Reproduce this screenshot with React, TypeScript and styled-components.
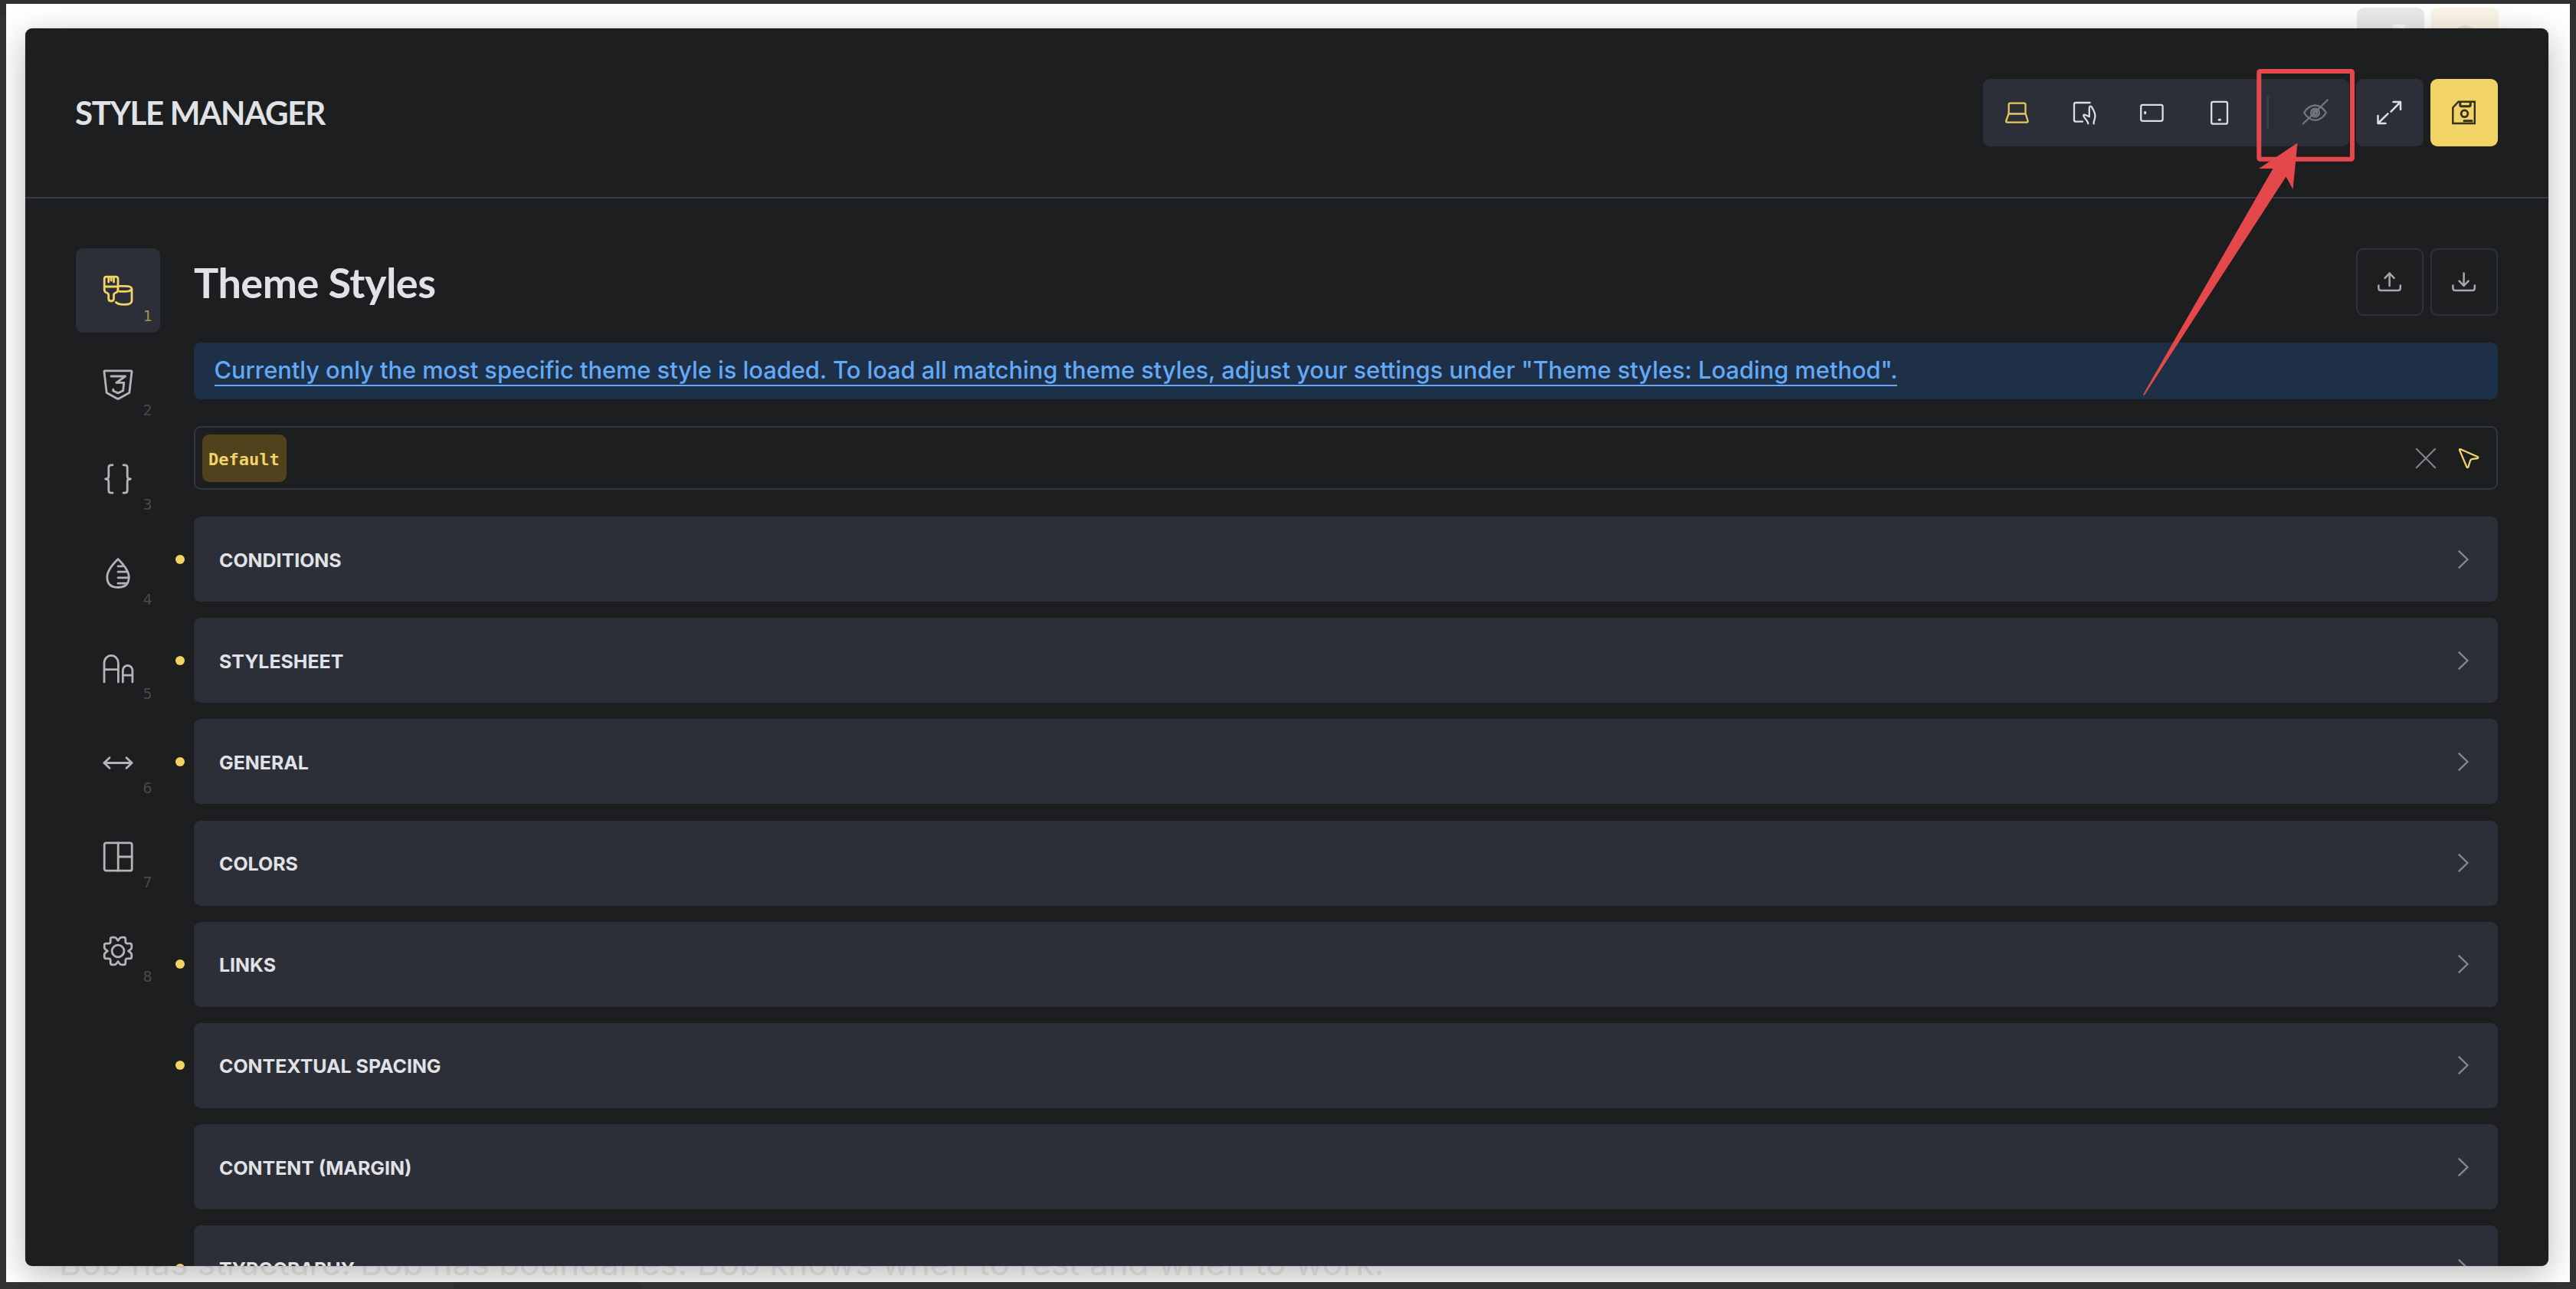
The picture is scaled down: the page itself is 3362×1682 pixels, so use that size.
import React from 'react';
import styled, { createGlobalStyle } from 'styled-components';

const GlobalStyle = createGlobalStyle`
    * {
        box-sizing: border-box;
    }

    body {
        margin: 0;
        background: #323232;
    }
`

const Frame = styled.div`
    display: flex;
    flex-direction: column;
    width: 3362px;
    height: 1682px;
    padding: 5px 8px 0;
    overflow: hidden;
    background: linear-gradient(#2f2f2f 21px, #323232 22px);
    font-family: Inter, sans-serif;
`

const Page = styled.div`
    position: relative;
    display: flex;
    flex-direction: column;
    justify-content: space-between;
    height: 1668px;
    overflow: hidden;
    background: white;
`

const BottomTab = styled.div`
    width: 246px;
    height: 9px;
    margin-left: 584px;
    border-radius: 6px 6px 0 0;
    background: #2d2d2d;
`

const PageButtons = styled.div`
    display: flex;
    justify-content: flex-end;
    gap: 8.8px;
    padding: 5px 93.5px 0 0;
`

const PageButton = styled.div<{ $color: string, $background: string }>`
    display: flex;
    justify-content: center;
    width: 88px;
    height: 88px;
    padding-top: 15px;
    border-radius: 9px;
    color: ${props => props.$color};
    background: ${props => props.$background};
`

const PageQuote = styled.p`
    margin: 0;
    padding-left: 69px;
    color: #ececec;
    font-size: 44px;
    line-height: 50px;
    white-space: nowrap;
`

// The window sits on top of the page

const Manager = styled.div`
    position: absolute;
    top: 32px;
    left: 25px;
    display: flex;
    flex-direction: column;
    width: 3293px;
    height: 1615px;
    overflow: hidden;
    border-radius: 9px;
    background: #1d1e20;
    color: #e0e2e6;
    box-shadow: 0 11px 44px rgba(0, 0, 0, 0.28), 0 0 1px rgba(0, 0, 0, 0.5);
`

const Header = styled.header`
    display: flex;
    align-items: center;
    justify-content: space-between;
    height: 222px;
    flex-shrink: 0;
    padding: 0 66px;
    border-bottom: 2px solid #363a42;
`

const HeaderTitle = styled.h1`
    margin: 0 0 1px -1px;
    font-family: Lato, sans-serif;
    font-size: 42px;
    font-weight: bold;
    letter-spacing: -1.3px;
`

const HeaderActions = styled.div`
    display: flex;
    gap: 8.8px;
`

const ButtonGroup = styled.div`
    display: flex;
    align-items: center;
    border-radius: 9px;
    background: #2c2f37;
`

const GroupDivider = styled.div`
    width: 3px;
    height: 44px;
    margin: 0 17.6px;
    background: #3a3e47;
`

const IconButton = styled.button<{ $color?: string, $background?: string, $outlined?: boolean }>`
    display: flex;
    align-items: center;
    justify-content: center;
    width: 88px;
    height: 88px;
    padding: 0;
    color: ${props => props.$color || '#dcdee1'};
    background: ${props => props.$background || 'transparent'};
    border: ${props => props.$outlined ? '2px solid #2e3138' : 'none'};
    border-radius: 9px;
`

const Body = styled.div`
    display: flex;
    gap: 44px;
    padding: 65px 66px 0;
`

const Sidebar = styled.nav`
    display: flex;
    flex-direction: column;
    gap: 13.7px;
    width: 110px;
`

const SidebarItem = styled.div<{ $active?: boolean }>`
    position: relative;
    display: flex;
    align-items: center;
    justify-content: center;
    height: 109.5px;
    border-radius: 9px;
    color: ${props => props.$active ? '#f2d366' : '#b2b4b7'};
    background: ${props => props.$active ? '#2c2f37' : 'transparent'};

    > span {
        position: absolute;
        right: 10.5px;
        bottom: 9.5px;
        color: ${props => props.$active ? '#a3904c' : '#48494c'};
        font-family: 'DejaVu Sans Mono', monospace;
        font-size: 20px;
        line-height: 24px;
    }
`

const Content = styled.main`
    display: flex;
    flex: 1;
    flex-direction: column;
`

const ContentHeader = styled.div`
    display: flex;
    align-items: center;
    justify-content: space-between;
    height: 88px;
`

const ContentTitle = styled.h2`
    margin: 0;
    font-family: Lato, sans-serif;
    font-size: 54px;
    font-weight: bold;
    letter-spacing: -0.5px;
`

const Info = styled.div`
    display: flex;
    align-items: center;
    height: 74px;
    margin-top: 35px;
    padding-left: 26.5px;
    border-radius: 9px;
    background: #1d3047;
`

const InfoLink = styled.a`
    padding-bottom: 1px;
    border-bottom: 2px solid #63a9f5;
    color: #63a9f5;
    font-size: 30.8px;
    font-weight: 500;
    letter-spacing: -0.02px;
    line-height: 37px;
    white-space: nowrap;
`

const StyleInput = styled.div`
    display: flex;
    align-items: center;
    height: 83px;
    margin-top: 35px;
    padding: 0 23px 0 8.5px;
    border: 2px solid #33373e;
    border-radius: 9px;
`

const StyleTag = styled.span`
    display: flex;
    align-items: center;
    height: 62px;
    margin-right: auto;
    padding: 3px 9.5px 0 8.5px;
    border-radius: 9px;
    color: #f2d366;
    background: #4f421d;
    font-family: 'DejaVu Sans Mono', monospace;
    font-size: 22px;
    font-weight: bold;
`

const InputIcons = styled.div`
    display: flex;
    gap: 30.5px;
`

const SectionList = styled.ul`
    display: flex;
    flex-direction: column;
    gap: 21.2px;
    margin: 35px 0 0;
    padding: 0;
    list-style: none;
`

const Section = styled.li<{ $changed?: boolean }>`
    position: relative;
    display: flex;
    align-items: center;
    justify-content: space-between;
    height: 111px;
    padding: 0 38px 0 33px;
    border-radius: 9px;
    background: #2c2f37;
    font-size: 24.9px;
    font-weight: 700;

    &::before {
        content: '';
        display: ${props => props.$changed ? 'block' : 'none'};
        position: absolute;
        left: -24px;
        width: 12px;
        height: 12px;
        border-radius: 50%;
        background: #f2d366;
    }
`

const SectionTitle = styled.span`
    padding-top: 2px;
`

const IconTone = styled.span<{ $color: string }>`
    display: block;
    color: ${props => props.$color};
`

const Annotation = styled.svg`
    position: absolute;
    top: 0;
    left: 0;
    pointer-events: none;
`

const Svg = styled.svg`
    display: block;
    overflow: visible;
    fill: none;
    stroke: currentColor;
    stroke-linecap: round;
    stroke-linejoin: round;
`

interface IconProps {
    size?: number,
    stroke?: number,
    children: React.ReactNode
}

const Icon = ({ size = 30, stroke = 2.3, children }: IconProps) => (
    <Svg width={size} height={size} viewBox={`0 0 ${size} ${size}`} strokeWidth={stroke}>
        {children}
    </Svg>
)

const ExpandIcon = () => (
    <Icon stroke={2.5}>
        <path d="M19.5 1H29V11M29 1L16.5 13.7M-.5 19V29H9.5M-.5 29L12.5 16.3" />
    </Icon>
)

const SaveIcon = () => (
    <Icon stroke={2.4}>
        <path strokeLinejoin="miter" d="M7.5 .8H28.8V29H.3V8.5z" />
        <path d="M9.8 1.5V5q0 1.8 1.8 1.8h9.8q1.8 0 1.8-1.8V1.5" strokeWidth="3" />
        <circle cx="15.5" cy="16.3" r="4.4" strokeWidth="2.8" />
        <path d="M15 25.8h10" strokeWidth="3" />
    </Icon>
)

const GearTeeth = 'M19 5.2L21.3 2.4Q22.3 1.2 23.8 1.2H26.6Q28.8 1.2 28.8 3.4V6.8Q28.8 9.2 31.2 9.2H34.6Q36.8 9.2 36.8 11.4V14.2Q36.8 15.7 35.6 16.7Q32.8 19 32.8 19'

const sidebarIcons = [
    <Icon size={38} stroke={2.8}>
        <path d="M1.2 14V4Q1.2 1.2 4 1.2H16.2Q19 1.2 19 4V14zM6.7 1.5V8M10.1 1.5V6M13.5 1.5V8" />
        <path d="M1.2 14V17.5Q1.2 21 4.3 22Q6.7 22.8 6.7 25V29.5Q6.7 33 10.1 33T13.5 29.5V25Q13.5 22.8 15.9 22Q19 21 19 17.5V14" />
        <path d="M21 13.4H28Q37 13.4 37 17.2V32.5Q37 37.4 27 37.4Q18.5 37.4 16.3 34.4M21 20.4H27.5Q35 20.4 37 17.2" />
    </Icon>,
    <Icon size={38} stroke={2.8}>
        <path d="M2.2 .8H35.8Q37.2 .8 37 2.3L33.8 29.6L20.4 36.9Q19 37.6 17.6 36.9L4.2 29.6L1 2.3Q.8 .8 2.2 .8z" />
        <path d="M10 8H28.6L16.8 16.4H26.8L25.6 26.8L19 30L12.8 27V25.2" />
    </Icon>,
    <Icon size={38} stroke={2.8}>
        <path d="M12 .8H10Q6.8 .8 6.8 4V15.5Q6.8 19 2.6 19Q6.8 19 6.8 22.5V34Q6.8 37.2 10 37.2H12" />
        <path d="M26 .8H28Q31.2 .8 31.2 4V15.5Q31.2 19 35.4 19Q31.2 19 31.2 22.5V34Q31.2 37.2 28 37.2H26" />
    </Icon>,
    <Icon size={38} stroke={2.8}>
        <path d="M19 .5Q4.8 14.5 4.8 24Q4.8 37.5 19 37.5T33.2 24Q33.2 14.5 19 .5z" />
        <path d="M19 9.8H25M19 17.2H30M19 24.8H33M19 32.2H30" />
    </Icon>,
    <Icon size={38} stroke={2.8}>
        <path d="M1 37V12.3a9.2 9.9 0 0 1 18.4 0V37M1 20.6H19.4M25.3 37V22a6.3 6.6 0 0 1 12.6 0V37M25.3 28.2H37.9" />
    </Icon>,
    <Icon size={38} stroke={2.8}>
        <path d="M.8 19.5H37.2M8 12.8L.8 19.5L8 26.2M30 12.8L37.2 19.5L30 26.2" />
    </Icon>,
    <Icon size={38} stroke={2.8}>
        <rect x="1.2" y=".8" width="36" height="36.4" rx="2.5" />
        <path d="M19.2 .8V37.2M19.2 19H37.2" />
    </Icon>,
    <Icon size={38} stroke={2.8}>
        <path d={GearTeeth} />
        <path d={GearTeeth} transform="rotate(90 19 19)" />
        <path d={GearTeeth} transform="rotate(180 19 19)" />
        <path d={GearTeeth} transform="rotate(270 19 19)" />
        <circle cx="19" cy="19" r="7.9" />
    </Icon>
]

const sections = [
    { title: 'CONDITIONS', changed: true },
    { title: 'STYLESHEET', changed: true },
    { title: 'GENERAL', changed: true },
    { title: 'COLORS', changed: false },
    { title: 'LINKS', changed: true },
    { title: 'CONTEXTUAL SPACING', changed: true },
    { title: 'CONTENT (MARGIN)', changed: false },
    { title: 'TYPOGRAPHY', changed: true }
]

const Toolbar = () => (
    <HeaderActions>
        <ButtonGroup>
            <IconButton $color="#e6c860">
                <Icon>
                    <path d="M4.7 16.5V4.5Q4.7 2.6 6.6 2.6H24.6Q26.5 2.6 26.5 4.5V16.5M4.5 16.5H26.7L29.5 25.5Q30 27.6 28.2 27.6H2.6Q.8 27.6 1.3 25.5z" />
                </Icon>
            </IconButton>
            <IconButton>
                <Icon>
                    <path d="M22.6 2H4.2Q2 2 2 4.2V24.4Q2 26.6 4.2 26.6H13" />
                    <path d="M20.3 29.3Q19.8 26.5 17.5 24Q14 20 14.3 18.6Q14.8 17 16.8 18L21.8 20.3V9Q21.8 6.6 23.4 6.6Q24.8 6.6 26 9.5Q29.5 15.5 29.4 19.5Q29.3 22 28.3 25Q27.4 27.5 27.6 29.3" />
                </Icon>
            </IconButton>
            <IconButton>
                <Icon>
                    <rect x="1.2" y="4.8" width="28.4" height="21" rx="2.2" />
                    <path d="M6.7 14.6V15.8" strokeWidth="3" />
                </Icon>
            </IconButton>
            <IconButton>
                <Icon>
                    <rect x="5.2" y=".9" width="20.8" height="28.8" rx="2.2" />
                    <path d="M15.2 24.3H16.4" strokeWidth="3" />
                </Icon>
            </IconButton>
            <GroupDivider />
            <IconButton $color="#74777c">
                <Icon>
                    <path d="M.2 15Q6 5.5 14.5 5.5T28.8 15Q23 24.8 14.5 24.8T.2 15zM30.8 -1.5L-1.2 29.5" />
                    <circle cx="14.5" cy="15" r="5.4" />
                    <ellipse cx="14.5" cy="15" rx="2.4" ry="3" />
                </Icon>
            </IconButton>
        </ButtonGroup>
        <IconButton $background="#2c2f37"><ExpandIcon /></IconButton>
        <IconButton $background="#f2d366" $color="#33301f"><SaveIcon /></IconButton>
    </HeaderActions>
)

class App extends React.Component {

    render() {
        return (
            <React.Fragment>
                <GlobalStyle />
                <Frame>
                    <Page>
                        <PageButtons>
                            <PageButton $color="#f8f9f9" $background="#e8ebe9">
                                <Svg width="38" height="30" viewBox="0 0 38 30" strokeWidth="4">
                                    <path strokeLinecap="butt" strokeLinejoin="miter" d="M0 15H20M22 9H36V22M36 9L24 21" />
                                </Svg>
                            </PageButton>
                            <PageButton $color="#e6e4dc" $background="#fbf5e6">
                                <Svg width="30" height="40" viewBox="0 0 30 40" strokeWidth="4">
                                    <circle cx="15" cy="22" r="12" />
                                </Svg>
                            </PageButton>
                        </PageButtons>
                        <PageQuote>
                            Bob has structure. Bob has boundaries. Bob knows when to rest and when to work.
                        </PageQuote>
                        <Manager>
                            <Header>
                                <HeaderTitle>STYLE MANAGER</HeaderTitle>
                                <Toolbar />
                            </Header>
                            <Body>
                                <Sidebar>
                                    {
                                        sidebarIcons.map((icon, index) => (
                                            <SidebarItem key={index} $active={index === 0}>
                                                {icon}
                                                <span>{index + 1}</span>
                                            </SidebarItem>
                                        ))
                                    }
                                </Sidebar>
                                <Content>
                                    <ContentHeader>
                                        <ContentTitle>Theme Styles</ContentTitle>
                                        <HeaderActions>
                                            <IconButton $outlined $color="#a6a8ab">
                                                <Icon stroke={2.5}>
                                                    <path d="M14.6 20V3.5M8.6 9.8L14.6 3.5L20.6 9.8M.4 19.5V23Q.4 26 3.4 26H25.8Q28.8 26 28.8 23V19.5" />
                                                </Icon>
                                            </IconButton>
                                            <IconButton $outlined $color="#a6a8ab">
                                                <Icon stroke={2.5}>
                                                    <path d="M14.6 3.5V20M8.6 13.7L14.6 20L20.6 13.7M.4 19.5V23Q.4 26 3.4 26H25.8Q28.8 26 28.8 23V19.5" />
                                                </Icon>
                                            </IconButton>
                                        </HeaderActions>
                                    </ContentHeader>
                                    <Info>
                                        <InfoLink>
                                            Currently only the most specific theme style is loaded. To load all matching theme styles, adjust your settings under "Theme styles: Loading method".
                                        </InfoLink>
                                    </Info>
                                    <StyleInput>
                                        <StyleTag>Default</StyleTag>
                                        <InputIcons>
                                            <IconTone $color="#808285">
                                                <Icon size={26} stroke={2.2}>
                                                    <path d="M.8 .8L25.2 25.2M25.2 .8L.8 25.2" />
                                                </Icon>
                                            </IconTone>
                                            <IconTone $color="#f2d366">
                                                <Icon size={26}>
                                                    <path d="M1 2.2Q.8 .6 2.4 1.2L24.6 11Q26 12 24.6 13L17 14.2Q15.6 14.6 15 16L12.4 24.4Q11.4 25.8 10.4 24.4z" />
                                                </Icon>
                                            </IconTone>
                                        </InputIcons>
                                    </StyleInput>
                                    <SectionList>
                                        {
                                            sections.map(section => (
                                                <Section key={section.title} $changed={section.changed}>
                                                    <SectionTitle>{section.title}</SectionTitle>
                                                    <IconTone $color="#85878b">
                                                        <Svg width="14" height="24" viewBox="0 0 14 24" strokeWidth="2.4">
                                                            <path d="M1.5 1.3L12.5 12L1.5 22.7" />
                                                        </Svg>
                                                    </IconTone>
                                                </Section>
                                            ))
                                        }
                                    </SectionList>
                                </Content>
                            </Body>
                        </Manager>
                    </Page>
                    <BottomTab />
                </Frame>
                <Annotation width="3362" height="1682" viewBox="0 0 3362 1682">
                    <rect x="2948.3" y="93" width="121.7" height="114.7" rx="1.5" fill="none" stroke="#e5484b" strokeWidth="6" />
                    <path d="M2998.5 186.5L2948 220H2966.5L2797 515L2798.5 516L2983.5 230.5L2992.5 247z" fill="#e5484b" />
                </Annotation>
            </React.Fragment>
        );
    }
}

export default App;
